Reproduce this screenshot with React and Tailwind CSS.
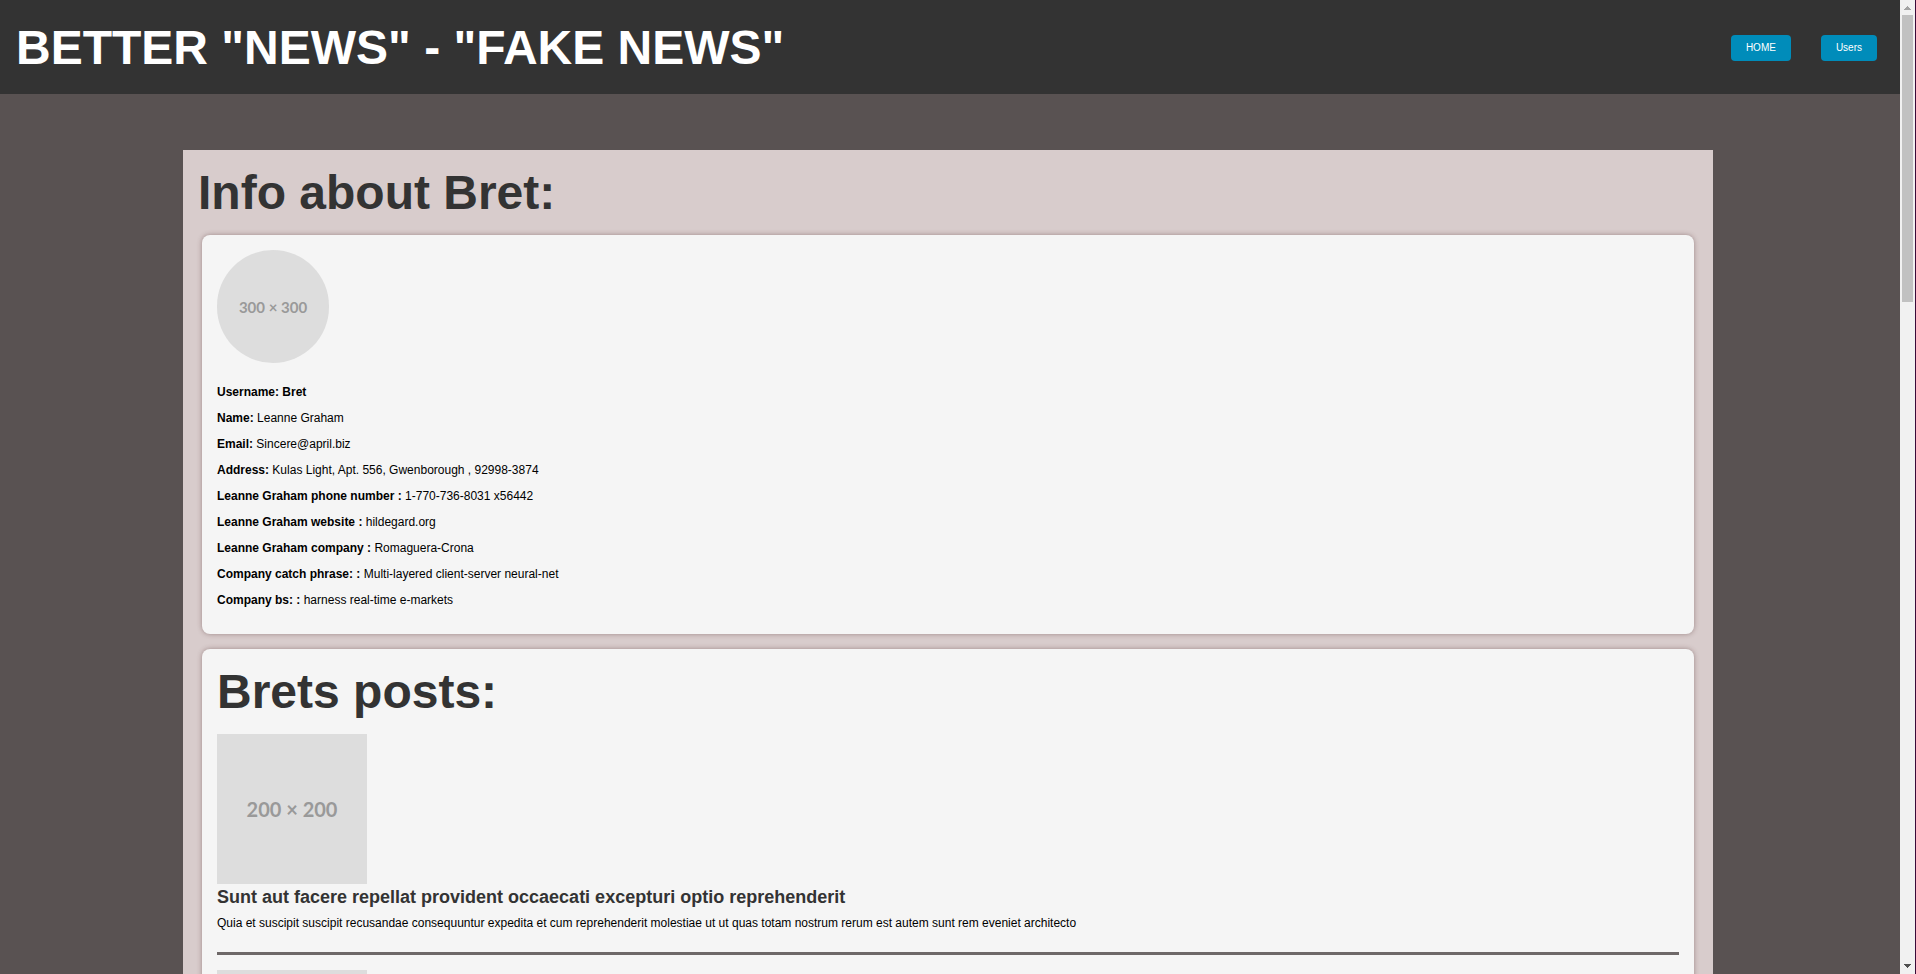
const details = [
  ["Name:", "Leanne Graham"],
  ["Email:", "Sincere@april.biz"],
  ["Address:", "Kulas Light, Apt. 556, Gwenborough , 92998-3874"],
  ["Leanne Graham phone number :", "1-770-736-8031 x56442"],
  ["Leanne Graham website :", "hildegard.org"],
  ["Leanne Graham company :", "Romaguera-Crona"],
  ["Company catch phrase: :", "Multi-layered client-server neural-net"],
  ["Company bs: :", "harness real-time e-markets"],
];

function Header() {
  return (
    <header className="flex items-center justify-between bg-[#333333] pt-[20px] pr-[23px] pb-[19px] pl-4">
      <h1 className="text-[48px] leading-[55px] font-bold text-white">BETTER "NEWS" - "FAKE NEWS"</h1>
      <nav className="flex gap-[30px]">
        <NavLink>HOME</NavLink>
        <NavLink>Users</NavLink>
      </nav>
    </header>
  );
}

function NavLink({ children }) {
  return (
    <a href="#" className="rounded bg-[#008cba] px-[15px] py-[7px] text-[10px] leading-3 text-white">
      {children}
    </a>
  );
}

function Card({ children }) {
  return (
    <section className="mx-1 rounded-lg bg-[#f5f5f5] px-[15px] pt-[15px] pb-4 shadow-[0_0_5px_rgba(87,51,51,0.45)]">
      {children}
    </section>
  );
}

function PostImage({ children }) {
  return (
    <div className="flex size-[150px] items-center justify-center bg-[#dddddd] font-[Lato,sans-serif] text-xl font-bold text-[#999999]">
      {children}
    </div>
  );
}

function Scrollbar() {
  return (
    <div className="flex w-4 shrink-0 flex-col items-center justify-between border-r border-[#3a0a38] bg-[#f1f1f1]" aria-hidden="true">
      <div className="flex flex-col items-center">
        <svg className="h-[15px] w-[15px]" viewBox="0 0 15 15" shapeRendering="crispEdges">
          <path d="M4 10h7v-1h-1v-1h-1v-1h-1v-1h-1v1h-1v1h-1v1h-1z" fill="#a3a3a3" />
        </svg>
        <div className="h-[287px] w-[11px] bg-[#c1c1c1]" />
      </div>
      <svg className="h-[15px] w-[15px]" viewBox="0 0 15 15" shapeRendering="crispEdges">
        <path d="M4 5h7v1h-1v1h-1v1h-1v1h-1v-1h-1v-1h-1v-1h-1z" fill="#505050" />
      </svg>
    </div>
  );
}

export default function App() {
  return (
    <div className="flex h-screen overflow-hidden bg-[#595252] font-['Liberation_Sans',Arial,sans-serif] text-xs text-black">
      <div className="min-w-0 flex-1 overflow-hidden">
        <Header />
        <main className="mt-14 mr-[187px] ml-[183px] bg-[#d8cccc] px-[15px] pt-[15px] pb-10">
          <h2 className="mb-[15px] text-[48px] leading-[55px] font-bold text-[#333333]">Info about Bret:</h2>
          <div className="flex flex-col gap-[15px]">
            <Card>
              <div className="mb-[21px] flex h-[113px] w-28 items-center justify-center rounded-full bg-[#dddddd] font-[Lato,sans-serif] text-[15px] leading-5 font-bold text-[#999999]">
                300 × 300
              </div>
              <p className="mb-[10px] font-bold">Username: Bret</p>
              {details.map(([label, value]) => (
                <p key={label} className="mb-[10px]">
                  <strong>{label}</strong> {value}
                </p>
              ))}
            </Card>
            <Card>
              <h2 className="mb-[15px] text-[48px] leading-[55px] font-bold text-[#333333]">Brets posts:</h2>
              <article>
                <PostImage>200 × 200</PostImage>
                <h3 className="mt-[3px] mb-2 text-lg leading-5 font-bold text-[#333333]">
                  Sunt aut facere repellat provident occaecati excepturi optio reprehenderit
                </h3>
                <p>
                  Quia et suscipit suscipit recusandae consequuntur expedita et cum reprehenderit molestiae ut ut quas
                  totam nostrum rerum est autem sunt rem eveniet architecto
                </p>
              </article>
              <hr className="mt-[21px] mb-[15px] border-0 border-t-[3px] border-[#6e6868]" />
              <article>
                <PostImage />
              </article>
            </Card>
          </div>
        </main>
      </div>
      <Scrollbar />
    </div>
  );
}
